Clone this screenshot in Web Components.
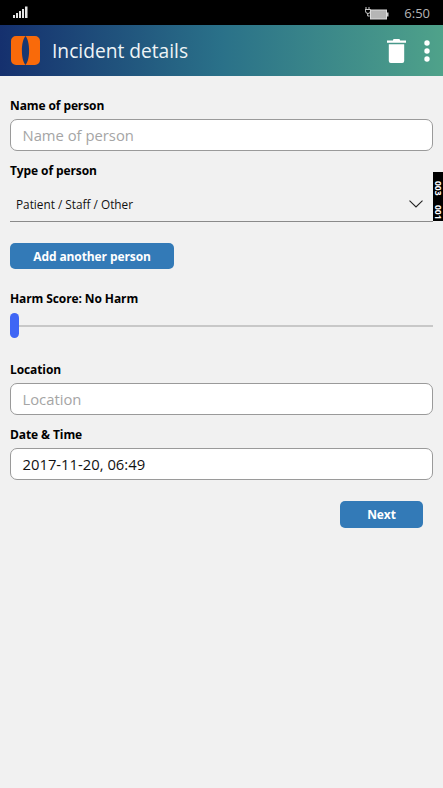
<!DOCTYPE html>
<html>
<head>
<meta charset="utf-8">
<title>Incident details</title>
<style>
  html, body { margin: 0; height: 100%; }
  body { background: #f1f1f1; font-family: "Open Sans", "Noto Sans", sans-serif; overflow: hidden; }
</style>
</head>
<body>
<incident-app></incident-app>
<script>
class StatusBar extends HTMLElement {
  constructor() {
    super();
    this.attachShadow({ mode: 'open' }).innerHTML = `
      <style>
        :host { display: flex; height: 25px; background: #000; color: #b5b5b5; align-items: center; justify-content: space-between; padding: 0 13px 0 13px; }
        .right { display: flex; align-items: center; gap: 15px; font-size: 13px; }
        svg { display: block; }
      </style>
      <svg width="16" height="13" viewBox="0 0 16 13" fill="#e4e4e4">
        <rect x="0" y="9" width="2" height="3"/><rect x="3" y="7" width="2" height="5"/><rect x="6" y="5" width="2" height="7"/><rect x="9" y="3" width="2" height="9"/><rect x="12" y="0.5" width="2.5" height="11.5"/>
      </svg>
      <div class="right">
        <svg width="24" height="14" viewBox="0 0 24 14">
          <path d="M1 1v2.500M4 1v2.500M0 3.500h5.500v1.500a2.500 2.500 0 0 1-5 0zM2.700 7.500v2.500h2" fill="none" stroke="#ccc" stroke-width="1"/>
          <rect x="5.500" y="4" width="16" height="9" fill="#b5b5b5" stroke="#ddd"/>
          <rect x="22" y="6.500" width="1.500" height="4" fill="#ccc"/>
        </svg>
        <span>6:50</span>
      </div>`;
  }
}

class AppHeader extends HTMLElement {
  constructor() {
    super();
    this.attachShadow({ mode: 'open' }).innerHTML = `
      <style>
        :host { display: flex; align-items: center; height: 51px; padding: 0 13px 0 11px; color: #fff; background: linear-gradient(90deg, #15306e 0%, #2a7189 50%, #4fa28a 100%); }
        .logo { flex: none; margin-right: 12px; }
        h1 { flex: 1; margin: 0; font-size: 19.200px; font-weight: 400; color: #eef4f6; }
        .actions { display: flex; align-items: center; gap: 18px; }
        svg { display: block; }
      </style>
      <svg class="logo" width="29" height="29" viewBox="0 0 29 29">
        <path fill="#f96a0a" fill-rule="evenodd" d="M5 0h19a5 5 0 0 1 5 5v19a5 5 0 0 1-5 5H5a5 5 0 0 1-5-5V5a5 5 0 0 1 5-5zM14.500 0c-2.500 3-3.600 8.500-3.600 14.500s1.100 11.500 3.600 14.500c2.500-3 3.600-8.500 3.600-14.500S17 3 14.500 0z"/>
      </svg>
      <h1><slot></slot></h1>
      <div class="actions">
        <svg width="19" height="24" viewBox="0 0 19 24" fill="#fff">
          <path d="M6.500 0h6l.6 1.500H19v2.300H0V1.500h5.900zM1.800 5.200h15.400v16.800a2 2 0 0 1-2 2H3.800a2 2 0 0 1-2-2z"/>
        </svg>
        <svg width="6" height="22" viewBox="0 0 6 22" fill="#fff">
          <circle cx="3" cy="3" r="2.700"/><circle cx="3" cy="11" r="2.700"/><circle cx="3" cy="19" r="2.700"/>
        </svg>
      </div>`;
  }
}

class TextField extends HTMLElement {
  constructor() {
    super();
    this.attachShadow({ mode: 'open' });
  }
  connectedCallback() {
    const label = this.getAttribute('label') || '';
    const placeholder = this.getAttribute('placeholder');
    const value = this.getAttribute('value');
    this.shadowRoot.innerHTML = `
      <style>
        :host { display: block; }
        label { display: block; height: 23px; line-height: 20px; font-size: 12px; font-weight: 700; letter-spacing: -.1px; color: #000; }
        .box { box-sizing: border-box; height: 32px; line-height: 31px; padding: 0 11.500px; background: #fff; border: 1.500px solid #9a9a9a; border-radius: 7px; font-size: 14.800px; color: #111; }
        .box.empty { color: #a5a5a5; }
      </style>
      <label>${label}</label>
      <div class="box ${value ? '' : 'empty'}">${value || placeholder}</div>`;
  }
}

class SelectField extends HTMLElement {
  constructor() {
    super();
    this.attachShadow({ mode: 'open' });
  }
  connectedCallback() {
    this.shadowRoot.innerHTML = `
      <style>
        :host { display: block; }
        label { display: block; height: 25px; line-height: 17px; font-size: 12px; font-weight: 700; letter-spacing: -.1px; color: #000; }
        .box { box-sizing: border-box; display: flex; align-items: center; justify-content: space-between; height: 35px; padding: 0 10px 0 6px; border-bottom: 1.500px solid #8a8a8a; font-size: 11.800px; color: #111; }
        svg { display: block; }
      </style>
      <label>${this.getAttribute('label') || ''}</label>
      <div class="box">
        <span>${this.getAttribute('value') || ''}</span>
        <svg width="14" height="8" viewBox="0 0 14 8" fill="none" stroke="#222" stroke-width="1.100"><path d="M.5.700 7 7l6.500-6.300"/></svg>
      </div>`;
  }
}

class ActionButton extends HTMLElement {
  constructor() {
    super();
    this.attachShadow({ mode: 'open' }).innerHTML = `
      <style>
        :host { display: flex; align-items: center; justify-content: center; box-sizing: border-box; background: #337ab7; color: #fff; border-radius: 5px; font-size: 12px; font-weight: 700; letter-spacing: -.1px; }
      </style>
      <slot></slot>`;
  }
}

class HarmSlider extends HTMLElement {
  constructor() {
    super();
    this.attachShadow({ mode: 'open' }).innerHTML = `
      <style>
        :host { display: flex; align-items: center; height: 25px; }
        .thumb { flex: none; width: 9px; height: 25px; background: #3f66f5; border-radius: 4.500px; }
        .track { flex: 1; height: 2px; background: #c8c8c8; }
      </style>
      <div class="thumb"></div><div class="track"></div>`;
  }
}

class IncidentApp extends HTMLElement {
  constructor() {
    super();
    this.attachShadow({ mode: 'open' }).innerHTML = `
      <style>
        :host { display: block; position: relative; height: 788px; background: #f1f1f1; }
        main { padding: 20px 10px 0; }
        .harm { display: block; margin-top: 21px; height: 23px; line-height: 17px; font-size: 12px; font-weight: 700; letter-spacing: -.1px; color: #000; }
        .foot { display: flex; justify-content: flex-end; margin-top: 21px; padding-right: 10px; }
        .add { width: 164px; height: 26px; margin-top: 21px; }
        .next { width: 83px; height: 27px; }
        select-field { margin-top: 11px; }
        .loc { margin-top: 22px; }
        .date { margin-top: 10px; }
        .tag { box-sizing: border-box; position: absolute; top: 172px; right: 0; width: 10px; height: 49px; padding-bottom: 1px; background: #000; color: #fff; font-size: 8.500px; font-weight: 700; line-height: 10px; writing-mode: vertical-rl; display: flex; justify-content: flex-end; gap: 10px; }
      </style>
      <status-bar></status-bar>
      <app-header>Incident details</app-header>
      <main>
        <text-field label="Name of person" placeholder="Name of person"></text-field>
        <select-field label="Type of person" value="Patient / Staff / Other"></select-field>
        <action-button class="add">Add another person</action-button>
        <span class="harm">Harm Score: No Harm</span>
        <harm-slider></harm-slider>
        <text-field class="loc" label="Location" placeholder="Location"></text-field>
        <text-field class="date" label="Date &amp; Time" value="2017-11-20, 06:49"></text-field>
        <div class="foot"><action-button class="next">Next</action-button></div>
      </main>
      <div class="tag"><span>003</span><span>001</span></div>`;
  }
}

customElements.define('status-bar', StatusBar);
customElements.define('app-header', AppHeader);
customElements.define('text-field', TextField);
customElements.define('select-field', SelectField);
customElements.define('action-button', ActionButton);
customElements.define('harm-slider', HarmSlider);
customElements.define('incident-app', IncidentApp);
</script>
</body>
</html>
